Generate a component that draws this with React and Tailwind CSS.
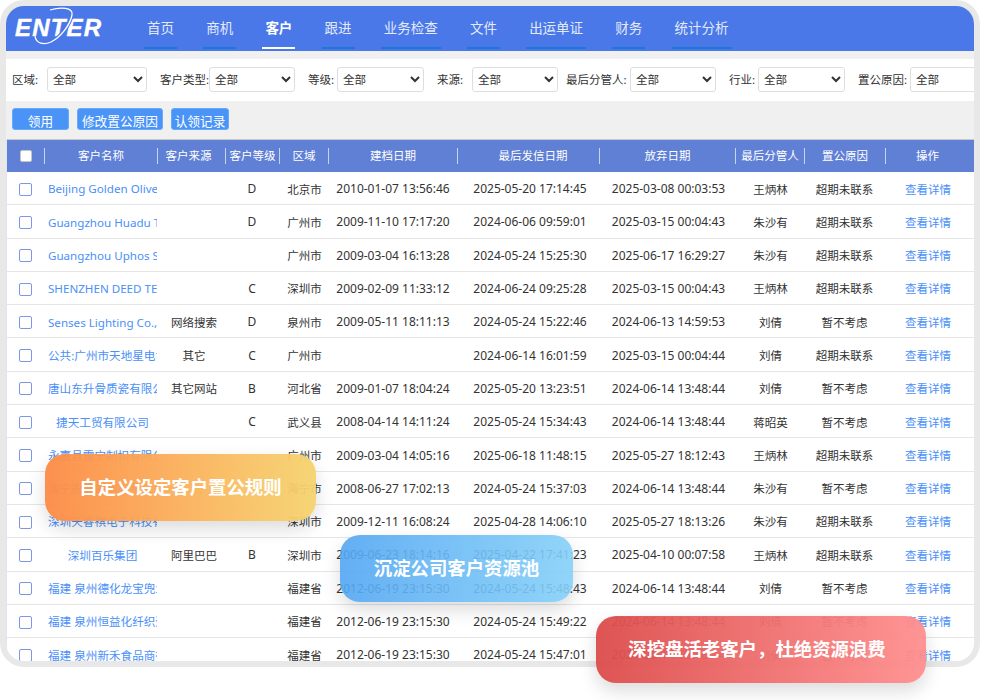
import React from "react";

const navItems = ["首页", "商机", "客户", "跟进", "业务检查", "文件", "出运单证", "财务", "统计分析"];

const filters = [
  { label: "区域:", labelClass: "w-[35px]", selectClass: "w-[100px]", gap: "mr-[13px]" },
  { label: "客户类型:", labelClass: "w-[49px]", selectClass: "w-[86px]", gap: "mr-[13px]" },
  { label: "等级:", labelClass: "w-[29px]", selectClass: "w-[87px]", gap: "mr-[13px]" },
  { label: "来源:", labelClass: "w-[35px]", selectClass: "w-[86px]", gap: "mr-[8px]" },
  { label: "最后分管人:", labelClass: "w-[64px]", selectClass: "w-[86px]", gap: "mr-[13px]" },
  { label: "行业:", labelClass: "w-[29px]", selectClass: "w-[87px]", gap: "mr-[13px]" },
  { label: "置公原因:", labelClass: "w-[52px]", selectClass: "w-[86px]", gap: "" },
];

const headers = [
  { text: "客户名称" },
  { text: "客户来源", pad: "pr-[6px]" },
  { text: "客户等级" },
  { text: "区域" },
  { text: "建档日期" },
  { text: "最后发信日期", pad: "pl-[9px]" },
  { text: "放弃日期" },
  { text: "最后分管人" },
  { text: "置公原因" },
  { text: "操作", pad: "pr-[5px]" },
];

const rows = [
  ["Beijing Golden Olive Trading Co., Ltd", "", "D", "北京市", "2010-01-07 13:56:46", "2025-05-20 17:14:45", "2025-03-08 00:03:53", "王炳林", "超期未联系"],
  ["Guangzhou Huadu Trading Co., Ltd", "", "D", "广州市", "2009-11-10 17:17:20", "2024-06-06 09:59:01", "2025-03-15 00:04:43", "朱沙有", "超期未联系"],
  ["Guangzhou Uphos Sanitary Ware Co.", "", "", "广州市", "2009-03-04 16:13:28", "2024-05-24 15:25:30", "2025-06-17 16:29:27", "朱沙有", "超期未联系"],
  ["SHENZHEN DEED TECHNOLOGY CO.", "", "C", "深圳市", "2009-02-09 11:33:12", "2024-06-24 09:25:28", "2025-03-15 00:04:43", "王炳林", "超期未联系"],
  ["Senses Lighting Co., Limited", "网络搜索", "D", "泉州市", "2009-05-11 18:11:13", "2024-05-24 15:22:46", "2024-06-13 14:59:53", "刘倩", "暂不考虑"],
  ["公共:广州市天地星电讯有限公司", "其它", "C", "广州市", "", "2024-06-14 16:01:59", "2025-03-15 00:04:44", "刘倩", "超期未联系"],
  ["唐山东升骨质瓷有限公司", "其它网站", "B", "河北省", "2009-01-07 18:04:24", "2025-05-20 13:23:51", "2024-06-14 13:48:44", "刘倩", "暂不考虑"],
  ["捷天工贸有限公司", "", "C", "武义县", "2008-04-14 14:11:24", "2025-05-24 15:34:43", "2024-06-14 13:48:44", "蒋昭英", "暂不考虑"],
  ["永嘉县雷宁制扣有限公司", "", "", "广州市", "2009-03-04 14:05:16", "2025-06-18 11:48:15", "2025-05-27 18:12:43", "王炳林", "超期未联系"],
  ["海宁永盛皮革有限公司", "", "", "海宁市", "2008-06-27 17:02:13", "2024-05-24 15:37:03", "2024-06-14 13:48:44", "朱沙有", "暂不考虑"],
  ["深圳天睿祺电子科技有限公司", "", "", "深圳市", "2009-12-11 16:08:24", "2025-04-28 14:06:10", "2025-05-27 18:13:26", "朱沙有", "超期未联系"],
  ["深圳百乐集团", "阿里巴巴", "B", "深圳市", "2009-06-23 18:14:16", "2025-04-22 17:41:23", "2025-04-10 00:07:58", "王炳林", "超期未联系"],
  ["福建 泉州德化龙宝兜业有限公司", "", "", "福建省", "2012-06-19 23:15:30", "2024-05-24 15:48:43", "2024-06-14 13:48:44", "刘倩", "暂不考虑"],
  ["福建 泉州恒益化纤织造有限公司", "", "", "福建省", "2012-06-19 23:15:30", "2024-05-24 15:49:22", "2024-06-14 13:48:44", "刘倩", "暂不考虑"],
  ["福建 泉州新禾食品商行有限公司", "", "", "福建省", "2012-06-19 23:15:30", "2024-05-24 15:47:01", "2024-06-14 13:48:44", "刘倩", "暂不考虑"],
];

const gridCols = "grid grid-cols-[37px_113px_68px_54px_49px_129px_142px_136px_69px_81px_89px]";

const Logo = () => {
  return (
    <div className="relative w-[92px] h-[40px] ml-[8px] shrink-0">
      <span className="absolute left-[1px] top-[7px] text-[24px] leading-[30px] font-bold italic tracking-[1.2px] text-white [-webkit-text-stroke:0.4px_white] font-['Liberation_Sans',sans-serif]">
        ENTER
      </span>
      <svg className="absolute left-0 top-0" width="92" height="40" viewBox="0 0 92 40" fill="none">
        <path d="M36 4C46 1 60 1 58 9C56 19 47 31 37 36C30 39 22 38 21 30" stroke="#4a78e8" strokeWidth="3.6" />
        <path d="M36 4C46 1 60 1 58 9C56 19 47 31 37 36C30 39 22 38 21 30" stroke="white" strokeWidth="1.3" />
      </svg>
    </div>
  );
};

const Nav = () => {
  return (
    <div className="h-[45px] bg-[#4a78e8] flex items-stretch shrink-0">
      <Logo />
      <div className="flex gap-[26.2px] ml-[38px]">
        {navItems.map((item) => (
          <div
            key={item}
            className={
              item === "客户"
                ? "px-[3px] pt-[13px] text-[13.5px] leading-[19px] font-bold text-white h-[43px] border-b-2 border-white"
                : "px-[3px] pt-[13px] text-[13.5px] leading-[19px] text-[#e3eafa] h-[43px] border-b-2 border-[#1f78d8]"
            }
          >
            {item}
          </div>
        ))}
      </div>
    </div>
  );
};

const FilterBar = () => {
  return (
    <div className="h-[42px] mt-[8px] bg-white flex items-start pt-[8px] pl-[6px] overflow-hidden shrink-0 text-[11.5px] text-[#333]">
      {filters.map((f) => (
        <div key={f.label} className={`flex items-center shrink-0 ${f.gap}`}>
          <span className={`${f.labelClass} whitespace-nowrap`}>{f.label}</span>
          <select className={`${f.selectClass} h-[25px] pl-[1px] border border-[#dedede] rounded-[3px] bg-white text-[11.5px] text-[#333]`}>
            <option>全部</option>
          </select>
        </div>
      ))}
    </div>
  );
};

const Buttons = () => {
  const btn = "h-[22px] bg-[#4a94f8] border border-[#6aa8fa] rounded-[3px] text-white text-[12.7px] leading-[24px] text-center whitespace-nowrap";
  return (
    <div className="h-[38px] flex items-start gap-[8px] pl-[6px] pt-[7px] shrink-0">
      <div className={`${btn} w-[57px]`}>领用</div>
      <div className={`${btn} w-[86px]`}>修改置公原因</div>
      <div className={`${btn} w-[58px]`}>认领记录</div>
    </div>
  );
};

const TableHead = () => {
  return (
    <div className={`${gridCols} h-[33px] shrink-0 bg-[#6080d5] border-t border-[#c9c9c9] items-center text-white text-[11.5px]`}>
      <div className="flex justify-center pl-[1px]">
        <input type="checkbox" className="w-[12px] h-[12px] appearance-none bg-white rounded-[2px] border border-[#c5c5c5]" />
      </div>
      {headers.map((h) => (
        <div key={h.text} className={`h-[16px] leading-[16px] border-l border-[#c8d3f0] text-center whitespace-nowrap overflow-hidden ${h.pad || ""}`}>
          {h.text}
        </div>
      ))}
    </div>
  );
};

const Row = ({ row }) => {
  const cell = "text-center whitespace-nowrap overflow-hidden";
  return (
    <div className={`${gridCols} h-[33.3px] shrink-0 items-center pt-[2px] bg-white border-b-[1.5px] border-[#e6e6e6] text-[11.5px] text-[#333]`}>
      <div className="flex justify-center">
        <div className="w-[13px] h-[13px] rounded-[2px] border-[1.5px] border-[#7d97e2] bg-white" />
      </div>
      <div className={`${cell} text-[#4a90f8] pl-[4px] text-[11.6px]`}>{row[0]}</div>
      <div className={`${cell} pl-[6px]`}>{row[1]}</div>
      <div className={`${cell} text-[12px]`}>{row[2]}</div>
      <div className={`${cell} pl-[2px]`}>{row[3]}</div>
      <div className={`${cell} text-[12px] pl-[1px]`}>{row[4]}</div>
      <div className={`${cell} text-[12px] pl-[4px]`}>{row[5]}</div>
      <div className={`${cell} text-[12px] pl-[3px]`}>{row[6]}</div>
      <div className={`${cell} pl-[2px]`}>{row[7]}</div>
      <div className={cell}>{row[8]}</div>
      <div className={`${cell} text-[#4a90f8] pr-[3px]`}>查看详情</div>
    </div>
  );
};

const Callout = ({ className, children }) => {
  return (
    <div className={`absolute h-[67px] pb-[2px] rounded-[20px] flex items-center justify-center text-white text-[18.4px] font-bold whitespace-nowrap shadow-[0_8px_18px_rgba(0,0,0,0.14)] ${className}`}>
      {children}
    </div>
  );
};

export default function App() {
  return (
    <div className="relative w-[1000px] h-[700px] bg-white overflow-hidden font-['Noto_Sans','Noto_Sans_CJK_SC',sans-serif]">
      <div className="w-[980px] h-[667px] border-[6px] border-[#e8e8e8] rounded-[24px] overflow-hidden bg-[#f0f0f0] flex flex-col">
        <Nav />
        <FilterBar />
        <Buttons />
        <div className="flex flex-col flex-1 overflow-hidden border-l border-[#dce4f5]">
          <TableHead />
          {rows.map((row, i) => (
            <Row key={i} row={row} />
          ))}
        </div>
      </div>
      <Callout className="left-[45px] top-[454px] w-[271px] bg-gradient-to-r from-[#fc8a45]/95 to-[#f5d36f]/95">
        自定义设定客户置公规则
      </Callout>
      <Callout className="left-[340px] top-[535px] w-[233px] bg-gradient-to-r from-[#52a6f2]/90 to-[#85d0f8]/90">
        沉淀公司客户资源池
      </Callout>
      <Callout className="left-[596px] top-[616px] w-[330px] pr-[8px] bg-gradient-to-r from-[#dc4b4b]/95 to-[#ff8f8f]/95">
        深挖盘活老客户，杜绝资源浪费
      </Callout>
    </div>
  );
}
